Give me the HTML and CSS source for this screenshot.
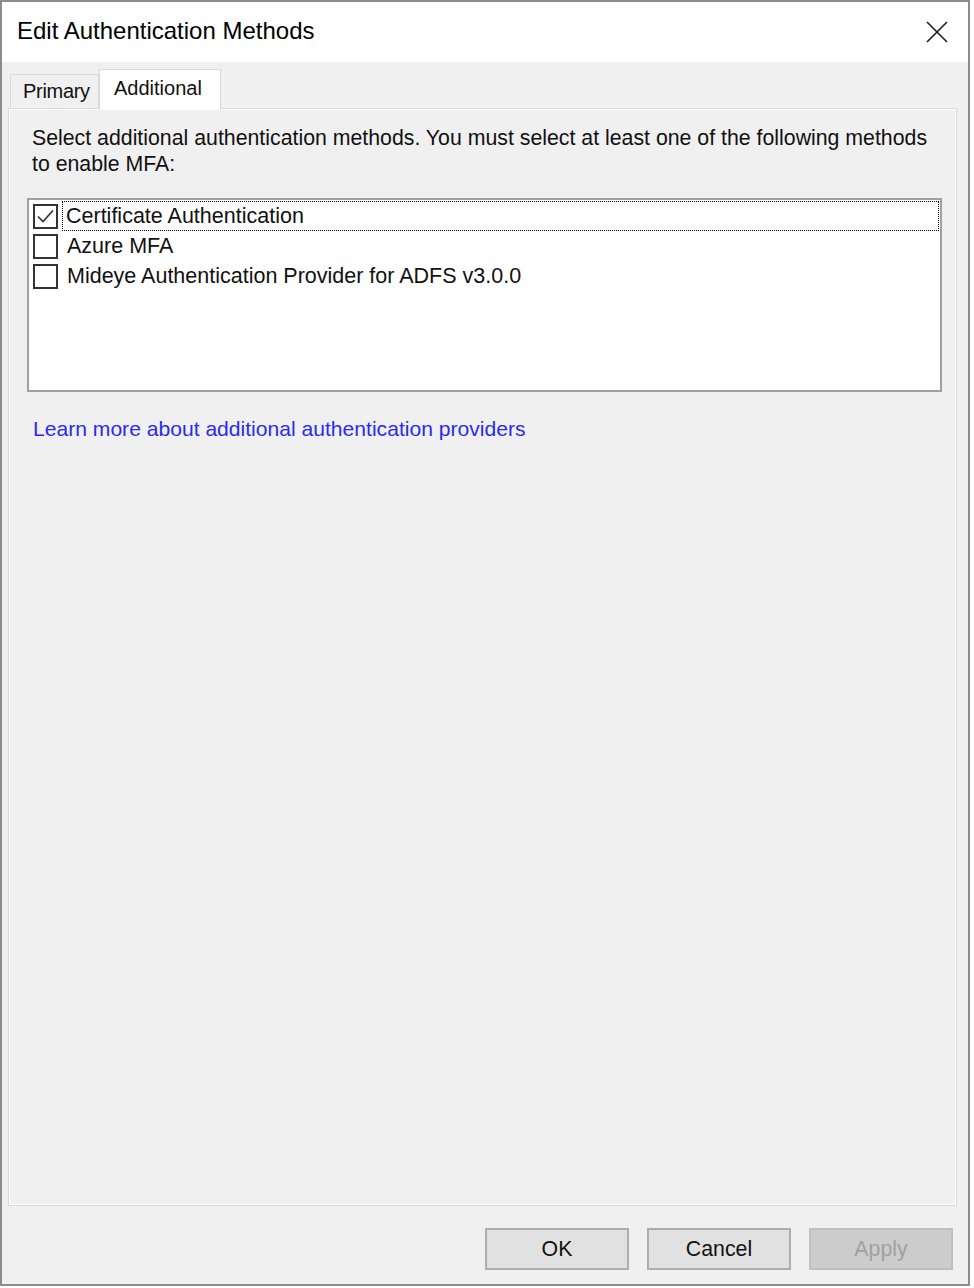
FILE: index.html
```html
<!DOCTYPE html>
<html lang="en">
<head>
  <meta charset="UTF-8" />
  <title>Edit Authentication Methods</title>
  <link rel="stylesheet" href="styles.css">
</head>
<body>
<div class="window">
  <div class="titlebar">
    <span class="title">Edit Authentication Methods</span>
    <button class="close" title="Close">
      <svg width="22" height="22" viewBox="0 0 22 22">
        <path d="M1 1 L21 21 M21 1 L1 21" stroke="#1a1a1a" stroke-width="1.6" fill="none"/>
      </svg>
    </button>
  </div>

  <div class="dialog-body">
    <div class="tabs">
      <div class="tab">Primary</div>
      <div class="tab active">Additional</div>
    </div>

    <div class="panel">
      <p class="intro">Select additional authentication methods. You must select at least one of the following methods<br>to enable MFA:</p>

      <div class="listbox">
        <div class="item">
          <span class="check checked">
            <svg width="21" height="21" viewBox="0 0 21 21">
              <path d="M3 10.5 L8 15.5 L18 4.5" stroke="#333" stroke-width="1.7" fill="none"/>
            </svg>
          </span>
          <span class="label focused">Certificate Authentication</span>
        </div>
        <div class="item">
          <span class="check"></span>
          <span class="label">Azure MFA</span>
        </div>
        <div class="item">
          <span class="check"></span>
          <span class="label">Mideye Authentication Provider for ADFS v3.0.0</span>
        </div>
      </div>

      <a class="learn-link" href="#">Learn more about additional authentication providers</a>
    </div>

    <div class="buttons">
      <button class="btn">OK</button>
      <button class="btn">Cancel</button>
      <button class="btn" disabled>Apply</button>
    </div>
  </div>
</div>
</body>
</html>
```

FILE: styles.css
```css
body {
  margin: 0;
  background: #ffffff;
  font-family: "Liberation Sans", Arial, sans-serif;
  font-size: 21.3px;
  color: #111;
}

.window {
  width: 966px;
  height: 1282px;
  border: 2px solid #8c8c8c;
  background: #f0f0f0;
  display: flex;
  flex-direction: column;
}

.titlebar {
  height: 60px;
  background: #ffffff;
  display: flex;
  align-items: center;
  justify-content: space-between;
  padding: 0 20px 0 15px;
}

.title {
  font-size: 24px;
  color: #000;
  margin-top: -2px;
}

.close {
  background: none;
  border: none;
  padding: 0;
  width: 22px;
  height: 22px;
  display: flex;
}

.dialog-body {
  flex: 1;
  display: flex;
  flex-direction: column;
  padding-top: 7px;
}

.tabs {
  display: flex;
  align-items: flex-end;
  height: 39px;
  padding-left: 8px;
  position: relative;
  z-index: 1;
  font-size: 20px;
}

.tab {
  height: 34px;
  padding: 0 8px 0 12px;
  border: 1px solid #d9d9d9;
  border-bottom: none;
  background: #f0f0f0;
  display: flex;
  align-items: center;
  box-sizing: border-box;
  width: 89px;
  letter-spacing: -0.3px;
}

.tab.active {
  height: 41px;
  width: 122px;
  margin-bottom: -2px;
  background: #ffffff;
  padding: 0 14px;
  align-items: flex-start;
  padding-top: 7px;
  letter-spacing: 0;
}

.panel {
  flex: 1;
  margin: 0 11px 0 6px;
  border: 1px solid #d9d9d9;
  box-shadow: inset 1px 1px 0 #ffffff, inset -1px -1px 0 #ffffff;
  padding: 16px 14px 0 18px;
}

.intro {
  margin: 0 0 21px;
  line-height: 26px;
  padding-left: 5px;
}

.listbox {
  height: 189px;
  border: 2px solid #a0a0a0;
  background: #ffffff;
  padding: 1px 0 0 4px;
}

.item {
  display: flex;
  align-items: center;
  height: 30px;
}

.check {
  width: 25px;
  height: 25px;
  box-sizing: border-box;
  border: 2px solid #333;
  background: #ffffff;
  display: flex;
  align-items: center;
  justify-content: center;
  flex-shrink: 0;
}

.label {
  margin-left: 5px;
  padding: 0 3px;
  line-height: 28px;
  border: 1px solid transparent;
  font-size: 21.5px;
}

.label.focused {
  flex: 1;
  border: 1px dotted #000;
  margin-left: 4px;
  margin-right: 1px;
}

.learn-link {
  display: inline-block;
  margin: 25px 0 0 6px;
  color: #2a2af2;
  text-decoration: none;
  font-size: 21.1px;
}

.buttons {
  height: 78px;
  display: flex;
  justify-content: flex-end;
  align-items: flex-start;
  gap: 18px;
  padding: 22px 15px 0 0;
  box-sizing: border-box;
}

.btn {
  width: 144px;
  height: 42px;
  font-family: "Liberation Sans", Arial, sans-serif;
  font-size: 21.3px;
  color: #111;
  background: #e1e1e1;
  border: 2px solid #adadad;
}

.btn:disabled {
  background: #cccccc;
  border-color: #bfbfbf;
  color: #a0a0a0;
}
```
